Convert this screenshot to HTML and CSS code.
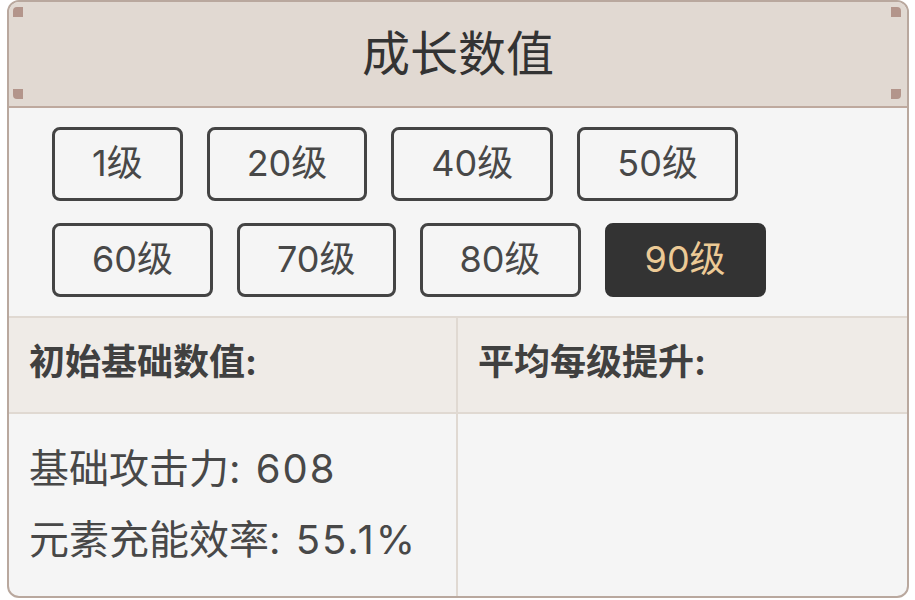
FILE: index.html
```html
<!DOCTYPE html>
<html lang="zh-CN">
<head>
  <meta charset="utf-8">
  <title>成长数值</title>
  <link rel="stylesheet" href="styles.css">
</head>
<body>
  <div class="card">
    <div class="card-head">
      <span class="dot dot-tl"></span>
      <span class="dot dot-tr"></span>
      <span class="dot dot-bl"></span>
      <span class="dot dot-br"></span>
      <h1 class="title">成长数值</h1>
    </div>
    <div class="levels">
      <div class="level-row">
        <div class="level">1级</div>
        <div class="level">20级</div>
        <div class="level">40级</div>
        <div class="level">50级</div>
      </div>
      <div class="level-row">
        <div class="level">60级</div>
        <div class="level">70级</div>
        <div class="level">80级</div>
        <div class="level active">90级</div>
      </div>
    </div>
    <div class="stats">
      <div class="stats-head left">初始基础数值:</div>
      <div class="stats-head">平均每级提升:</div>
      <div class="stats-body left">
        <p>基础攻击力: <span class="num">608</span></p>
        <p>元素充能效率: <span class="num">55.1%</span></p>
      </div>
      <div class="stats-body"></div>
    </div>
  </div>
</body>
</html>
```

FILE: styles.css
```css
body {
  margin: 0;
  padding: 0 6px 0 7px;
  background: #fff;
  font-family: Inter, "Noto Sans CJK SC", sans-serif;
  color: #444;
}

.card {
  border: 2px solid #b9a89e;
  border-radius: 12px;
  overflow: hidden;
  background: #f5f5f5;
}

.card-head {
  position: relative;
  height: 104px;
  background: #e1d9d2;
  border-bottom: 2px solid #bea99e;
  display: flex;
  align-items: center;
  justify-content: center;
}

.title {
  margin: 0;
  font-size: 48px;
  font-weight: normal;
  color: #333;
  line-height: 1;
}

.dot {
  position: absolute;
  width: 10px;
  height: 10px;
  background: #b3958b;
}

.dot-tl {
  top: 5px;
  left: 4px;
  border-top-left-radius: 4px;
}

.dot-tr {
  top: 5px;
  right: 6px;
  border-top-right-radius: 4px;
}

.dot-bl {
  bottom: 7px;
  left: 4px;
  border-bottom-left-radius: 4px;
}

.dot-br {
  bottom: 7px;
  right: 6px;
  border-bottom-right-radius: 4px;
}

.levels {
  height: 210px;
  box-sizing: border-box;
  padding: 19px 0 0 43px;
  border-bottom: 2px solid #e0d9d2;
  display: flex;
  flex-direction: column;
  gap: 22px;
}

.level-row {
  display: flex;
  gap: 24px;
}

.level {
  box-sizing: border-box;
  height: 74px;
  padding: 0 37px 3px;
  border: 3px solid #444;
  border-radius: 8px;
  display: flex;
  align-items: center;
  justify-content: center;
  font-size: 36px;
  line-height: 1;
  color: #484848;
}

.level.active {
  background: #333;
  border-color: #333;
  color: #ecca96;
}

.stats {
  display: grid;
  grid-template-columns: 1fr 1fr;
}

.stats-head {
  height: 96px;
  box-sizing: border-box;
  padding: 0 20px 6px;
  display: flex;
  align-items: center;
  background: #efebe7;
  border-bottom: 2px solid #e0d9d2;
  font-size: 36px;
  font-weight: bold;
  line-height: 1;
  color: #404040;
}

.stats-body {
  height: 182px;
  box-sizing: border-box;
  padding: 19px 20px 21px;
}

.left {
  border-right: 2px solid #e0d9d2;
}

.stats-body p {
  margin: 0;
  font-size: 40px;
  line-height: 71px;
  color: #484848;
}

.num {
  margin-left: 4px;
  letter-spacing: 2px;
}
```
